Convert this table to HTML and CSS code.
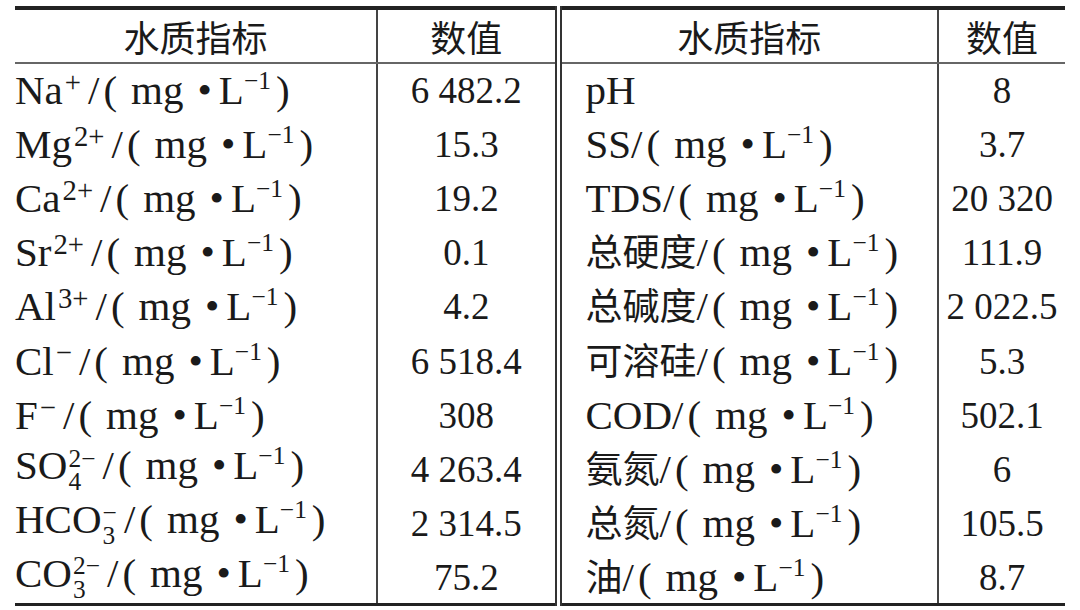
FILE: index.html
```html
<!DOCTYPE html>
<html lang="zh-CN">
  <head>
    <meta charset="UTF-8" />
    <meta name="viewport" content="width=device-width, initial-scale=1.0" />
    <title>水质指标</title>
    <link rel="stylesheet" href="styles.css">
  </head>
  <body>
    <table class="quality">
      <colgroup>
        <col class="colName" />
        <col class="colVal" />
        <col class="colName2" />
        <col class="colVal2" />
      </colgroup>
      <thead>
        <tr>
          <th>水质指标</th>
          <th class="split">数值</th>
          <th>水质指标</th>
          <th>数值</th>
        </tr>
      </thead>
      <tbody>
        <tr>
          <td class="name">Na<sup class="ch">+</sup>/<span class="op">(</span>mg<span class="dot">•</span>L<sup>−1</sup><span class="cp">)</span></td>
          <td class="val split">6 482.2</td>
          <td class="name2">pH</td>
          <td class="val">8</td>
        </tr>
        <tr>
          <td class="name">Mg<sup class="ch">2+</sup>/<span class="op">(</span>mg<span class="dot">•</span>L<sup>−1</sup><span class="cp">)</span></td>
          <td class="val split">15.3</td>
          <td class="name2">SS/<span class="op">(</span>mg<span class="dot">•</span>L<sup>−1</sup><span class="cp">)</span></td>
          <td class="val">3.7</td>
        </tr>
        <tr>
          <td class="name">Ca<sup class="ch">2+</sup>/<span class="op">(</span>mg<span class="dot">•</span>L<sup>−1</sup><span class="cp">)</span></td>
          <td class="val split">19.2</td>
          <td class="name2">TDS/<span class="op">(</span>mg<span class="dot">•</span>L<sup>−1</sup><span class="cp">)</span></td>
          <td class="val">20 320</td>
        </tr>
        <tr>
          <td class="name">Sr<sup class="ch">2+</sup>/<span class="op">(</span>mg<span class="dot">•</span>L<sup>−1</sup><span class="cp">)</span></td>
          <td class="val split">0.1</td>
          <td class="name2"><span class="cn">总硬度</span>/<span class="op">(</span>mg<span class="dot">•</span>L<sup>−1</sup><span class="cp">)</span></td>
          <td class="val">111.9</td>
        </tr>
        <tr>
          <td class="name">Al<sup class="ch">3+</sup>/<span class="op">(</span>mg<span class="dot">•</span>L<sup>−1</sup><span class="cp">)</span></td>
          <td class="val split">4.2</td>
          <td class="name2"><span class="cn">总碱度</span>/<span class="op">(</span>mg<span class="dot">•</span>L<sup>−1</sup><span class="cp">)</span></td>
          <td class="val">2 022.5</td>
        </tr>
        <tr>
          <td class="name">Cl<sup class="ch">−</sup>/<span class="op">(</span>mg<span class="dot">•</span>L<sup>−1</sup><span class="cp">)</span></td>
          <td class="val split">6 518.4</td>
          <td class="name2"><span class="cn">可溶硅</span>/<span class="op">(</span>mg<span class="dot">•</span>L<sup>−1</sup><span class="cp">)</span></td>
          <td class="val">5.3</td>
        </tr>
        <tr>
          <td class="name">F<sup class="ch">−</sup>/<span class="op">(</span>mg<span class="dot">•</span>L<sup>−1</sup><span class="cp">)</span></td>
          <td class="val split">308</td>
          <td class="name2">COD/<span class="op">(</span>mg<span class="dot">•</span>L<sup>−1</sup><span class="cp">)</span></td>
          <td class="val">502.1</td>
        </tr>
        <tr>
          <td class="name">SO<span class="ion"><span class="hi">2−</span><span class="lo">4</span></span>/<span class="op">(</span>mg<span class="dot">•</span>L<sup>−1</sup><span class="cp">)</span></td>
          <td class="val split">4 263.4</td>
          <td class="name2"><span class="cn">氨氮</span>/<span class="op">(</span>mg<span class="dot">•</span>L<sup>−1</sup><span class="cp">)</span></td>
          <td class="val">6</td>
        </tr>
        <tr>
          <td class="name">HCO<span class="ion"><span class="hi">−</span><span class="lo">3</span></span>/<span class="op">(</span>mg<span class="dot">•</span>L<sup>−1</sup><span class="cp">)</span></td>
          <td class="val split">2 314.5</td>
          <td class="name2"><span class="cn">总氮</span>/<span class="op">(</span>mg<span class="dot">•</span>L<sup>−1</sup><span class="cp">)</span></td>
          <td class="val">105.5</td>
        </tr>
        <tr>
          <td class="name">CO<span class="ion"><span class="hi">2−</span><span class="lo">3</span></span>/<span class="op">(</span>mg<span class="dot">•</span>L<sup>−1</sup><span class="cp">)</span></td>
          <td class="val split">75.2</td>
          <td class="name2"><span class="cn">油</span>/<span class="op">(</span>mg<span class="dot">•</span>L<sup>−1</sup><span class="cp">)</span></td>
          <td class="val">8.7</td>
        </tr>
      </tbody>
    </table>
  </body>
</html>
```

FILE: styles.css
```css
* {
  box-sizing: border-box;
}
body {
  margin: 0;
  background: #fff;
  color: #1a1a1a;
  font-family: "Liberation Serif", "Noto Sans CJK SC", serif;
  font-size: 41px;
}

.quality {
  margin: 6px 0 0 15px;
  width: 1050px;
  border-collapse: collapse;
  table-layout: fixed;
  border-top: 4px solid #222;
  border-bottom: 3px solid #222;
}

.colName {
  width: 362px;
}
.colVal {
  width: 181px;
}
.colName2 {
  width: 380px;
}
.colVal2 {
  width: 127px;
}

th,
td {
  padding: 0;
  border-left: 2px solid #444;
  white-space: nowrap;
}
th:first-child,
td:first-child {
  border-left: none;
}

th {
  height: 53px;
  font-family: "Noto Sans CJK SC", sans-serif;
  font-weight: 400;
  font-size: 36px;
  border-bottom: 2px solid #666;
}

td {
  height: 54.2px;
  line-height: 1;
}

.split {
  border-right: 7px double #333;
}

.name {
  padding-left: 0;
}
.name2 {
  padding-left: 24px;
}
.val {
  text-align: center;
  font-size: 37px;
}

.cn {
  font-family: "Noto Sans CJK SC", sans-serif;
  font-size: 37px;
}

sup {
  font-size: 0.62em;
  vertical-align: 0.6em;
  line-height: 0;
}
.ch {
  font-size: 0.7em;
  vertical-align: 0.42em;
  margin: 0 7px 0 2px;
}

.op {
  margin: 0 14px 0 4px;
}
.dot {
  margin: 0 7px 0 14px;
}
.cp {
  margin-left: 5px;
}

.ion {
  display: inline-block;
  font-size: 0.62em;
  line-height: 0.93;
  vertical-align: -0.44em;
  margin: 0 7px 0 1px;
}
.hi,
.lo {
  display: block;
}
```
